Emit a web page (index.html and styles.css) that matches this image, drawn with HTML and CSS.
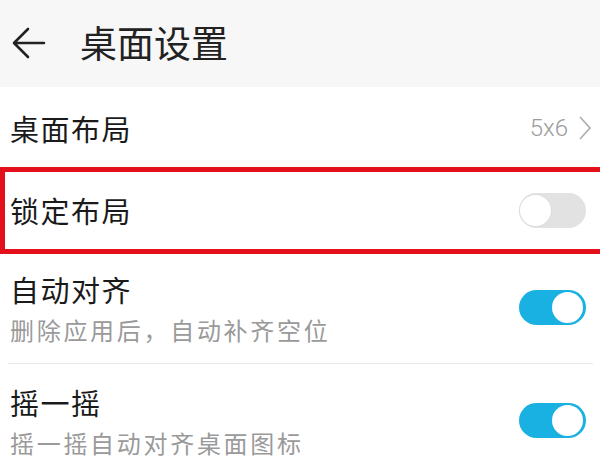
FILE: index.html
```html
<!DOCTYPE html>
<html lang="zh-CN">
<head>
<meta charset="utf-8">
<link rel="stylesheet" href="styles.css">
</head>
<body>
<div class="page">
  <header class="bar">
    <svg class="back" width="34" height="32" viewBox="0 0 34 32"><path d="M32 16H3M16 2L2 16l14 14" fill="none" stroke="#222" stroke-width="2.6" stroke-linecap="round" stroke-linejoin="round"/></svg>
    <h1 class="title">桌面设置</h1>
  </header>
  <div class="list">
    <div class="row single">
      <div class="label">桌面布局</div>
      <div class="value">5x6<svg class="chev" width="14" height="26" viewBox="0 0 14 26"><path d="M2 2l10 11L2 24" fill="none" stroke="#b0b0b0" stroke-width="1.8"/></svg></div>
    </div>
    <div class="row single">
      <div class="label">锁定布局</div>
      <div class="toggle off"><span class="knob"></span></div>
    </div>
    <div class="row double">
      <div class="texts">
        <div class="label">自动对齐</div>
        <div class="sub">删除应用后，自动补齐空位</div>
      </div>
      <div class="toggle on"><span class="knob"></span></div>
    </div>
    <div class="row double last">
      <div class="texts">
        <div class="label">摇一摇</div>
        <div class="sub">摇一摇自动对齐桌面图标</div>
      </div>
      <div class="toggle on"><span class="knob"></span></div>
    </div>
  </div>
  <div class="highlight"></div>
</div>
</body>
</html>
```
FILE: styles.css
```css
* { box-sizing: border-box; }
html, body { margin: 0; padding: 0; background: #fff; }
body {
  font-family: "Noto Sans CJK SC", "Noto Sans", sans-serif;
  color: #1e1e1e;
  overflow: hidden;
  width: 600px;
  height: 462px;
}
.page { position: relative; width: 600px; height: 462px; overflow: hidden; }
.bar {
  height: 87px;
  background: #f7f7f7;
  display: flex;
  align-items: center;
  padding-left: 12px;
  gap: 34px;
}
.back { display: block; margin-top: -2px; }
.title {
  margin: 0;
  font-size: 37px;
  font-weight: 400;
  line-height: 1;
  color: #222;
  margin-top: -2px;
}
.list { display: flex; flex-direction: column; }
.row {
  display: flex;
  align-items: center;
  justify-content: space-between;
  padding: 0 14px 0 10px;
}
.row.single { height: 82px; }
.row.double { height: 113px; border-bottom: 1px solid #e8e8e8; margin: 0 7px 0 8px; padding: 0 7px 0 2px; }
.row.last { border-bottom: none; }
.label { font-size: 29px; line-height: 1; color: #1a1a1a; letter-spacing: 1.5px; }
.texts { display: flex; flex-direction: column; gap: 14px; padding-top: 2px; }
.sub { font-size: 24px; line-height: 1; color: #9a9a9a; letter-spacing: 2.7px; }
.value {
  display: flex;
  align-items: center;
  gap: 10px;
  font-family: "Roboto", "Noto Sans", sans-serif;
  font-weight: 300;
  font-size: 24px;
  color: #9c9c9c;
  margin-right: -6px;
}
.toggle {
  width: 67px;
  height: 35px;
  border-radius: 18px;
  position: relative;
  flex: none;
}
.toggle.off { background: #e2e2e2; }
.toggle.on { background: #19b1e2; }
.knob {
  position: absolute;
  top: 2px;
  width: 31px;
  height: 31px;
  border-radius: 50%;
  background: #fff;
}
.toggle.off .knob { left: 1px; box-shadow: 0 0 0 1px #dcdcdc; }
.toggle.on .knob { right: 3px; }
.highlight {
  position: absolute;
  left: 0;
  top: 167px;
  width: 606px;
  height: 87px;
  border: 5px solid #e3101c;
}
```
